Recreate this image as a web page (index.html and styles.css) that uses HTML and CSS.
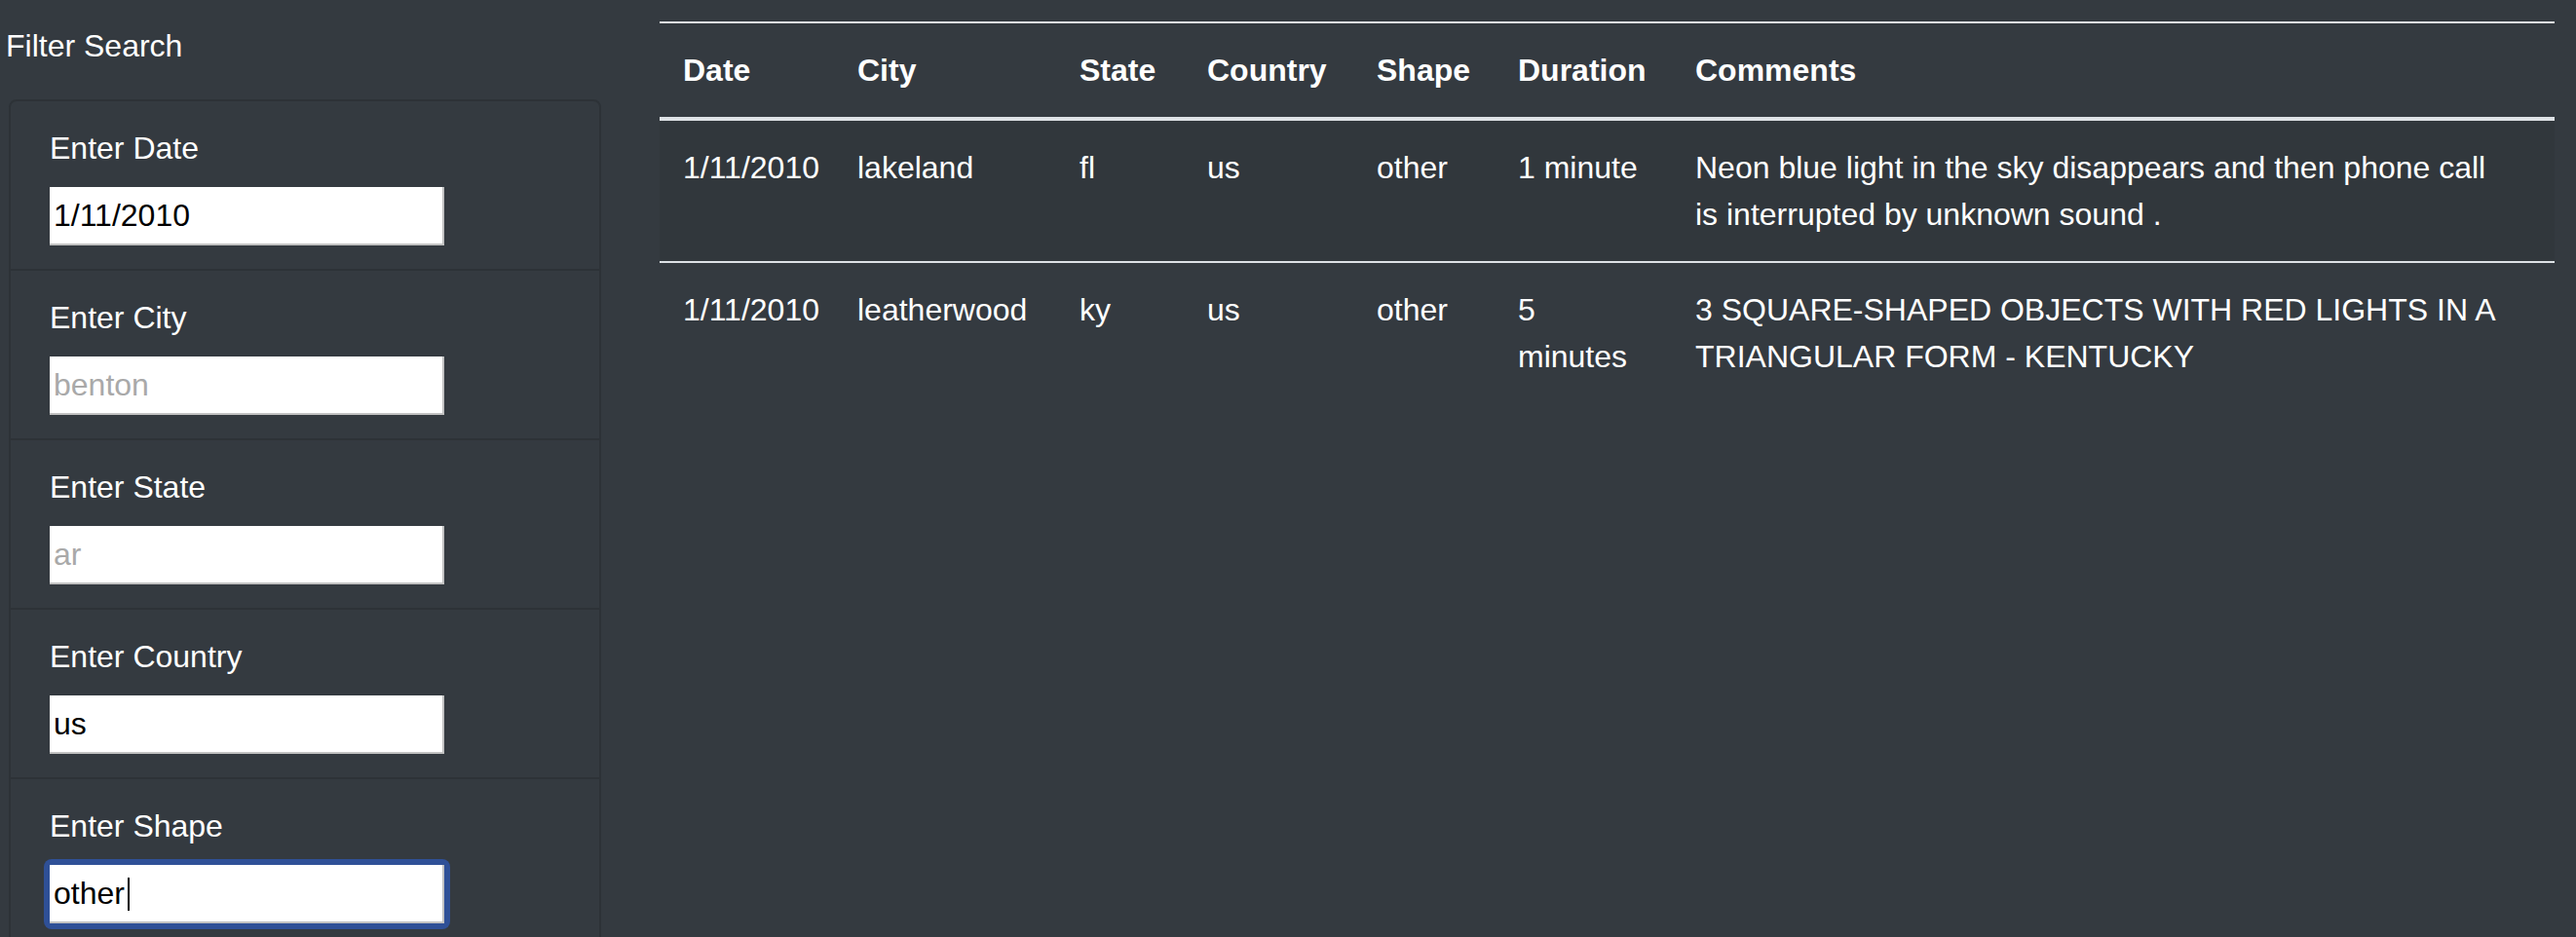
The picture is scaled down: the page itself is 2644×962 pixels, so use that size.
FILE: index.html
```html
<!DOCTYPE html>
<html lang="en">
<head>
<meta charset="utf-8">
<title>UFO Sightings</title>
<link rel="stylesheet" href="styles.css">
</head>
<body>
<div class="page">
  <aside class="sidebar">
    <div class="title">Filter Search</div>
    <ul class="card">
      <li class="field">
        <label class="field-label" for="datetime">Enter Date</label>
        <input class="field-input" id="datetime" type="text" value="1/11/2010" placeholder="1/11/2010">
      </li>
      <li class="field">
        <label class="field-label" for="city">Enter City</label>
        <input class="field-input" id="city" type="text" placeholder="benton">
      </li>
      <li class="field">
        <label class="field-label" for="state">Enter State</label>
        <input class="field-input" id="state" type="text" placeholder="ar">
      </li>
      <li class="field">
        <label class="field-label" for="country">Enter Country</label>
        <input class="field-input" id="country" type="text" value="us" placeholder="us">
      </li>
      <li class="field">
        <label class="field-label" for="shape">Enter Shape</label>
        <div class="focus-ring">
          <input class="field-input" id="shape" type="text" value="other" placeholder="circle">
          <span class="caret"></span>
        </div>
      </li>
    </ul>
  </aside>
  <main class="main">
    <table class="ufo-table">
      <colgroup>
        <col class="c-date">
        <col class="c-city">
        <col class="c-state">
        <col class="c-country">
        <col class="c-shape">
        <col class="c-duration">
        <col class="c-comments">
      </colgroup>
      <thead>
        <tr>
          <th>Date</th>
          <th>City</th>
          <th>State</th>
          <th>Country</th>
          <th>Shape</th>
          <th>Duration</th>
          <th class="comments">Comments</th>
        </tr>
      </thead>
      <tbody>
        <tr>
          <td>1/11/2010</td>
          <td>lakeland</td>
          <td>fl</td>
          <td>us</td>
          <td>other</td>
          <td>1 minute</td>
          <td class="comments">Neon blue light in the sky disappears and then phone call is interrupted by unknown sound .</td>
        </tr>
        <tr>
          <td>1/11/2010</td>
          <td>leatherwood</td>
          <td>ky</td>
          <td>us</td>
          <td>other</td>
          <td>5 minutes</td>
          <td class="comments">3 SQUARE-SHAPED OBJECTS WITH RED LIGHTS IN A TRIANGULAR FORM - KENTUCKY</td>
        </tr>
      </tbody>
    </table>
  </main>
</div>
</body>
</html>
```
FILE: styles.css
```css
html, body {
  margin: 0;
  padding: 0;
  background: #343a40;
  overflow: hidden;
}

body {
  font-family: "Liberation Sans", Arial, sans-serif;
  font-size: 32px;
  line-height: 48px;
  color: #ffffff;
}

.page {
  display: flex;
  align-items: flex-start;
  padding: 0 22px 0 6px;
}

/* ---------- sidebar ---------- */
.sidebar {
  flex: none;
  width: 611px;
  padding-top: 23px;
}

.title {
  margin-bottom: 31px;
}

.card {
  list-style: none;
  margin: 0 0 0 3px;
  padding: 0;
  border: 2px solid #2d3237;
  border-radius: 8px;
}

.field {
  padding: 24px 40px;
  border-top: 2px solid #2d3237;
}

.field:first-child {
  border-top: none;
}

.field-label {
  display: block;
  margin-bottom: 16px;
}

.field-input {
  display: block;
  box-sizing: border-box;
  width: 405px;
  height: 60px;
  margin: 0;
  padding: 0 4px;
  border: none;
  border-right: 2px solid #c2c2c2;
  border-bottom: 2px solid #c2c2c2;
  border-radius: 0;
  background: #ffffff;
  color: #000000;
  font-family: inherit;
  font-size: 32px;
  outline: none;
}

.field-input::placeholder {
  color: #a9a9a9;
  opacity: 1;
}

.focus-ring {
  position: relative;
  width: 405px;
  margin: -6px;
  padding: 6px;
  border-radius: 8px;
  background: #2f5097;
}

.caret {
  position: absolute;
  left: 86px;
  top: 19px;
  width: 2px;
  height: 34px;
  background: #000000;
}

/* ---------- table ---------- */
.main {
  flex: 1;
  min-width: 0;
  margin-left: 60px;
  padding-top: 22px;
}

.ufo-table {
  width: 100%;
  border-collapse: collapse;
  table-layout: fixed;
}

.c-date { width: 179px; }
.c-city { width: 228px; }
.c-state { width: 131px; }
.c-country { width: 174px; }
.c-shape { width: 145px; }
.c-duration { width: 182px; }

.ufo-table th,
.ufo-table td {
  padding: 24px;
  text-align: left;
  vertical-align: top;
  border-top: 2px solid #dee2e6;
}

.ufo-table th.comments,
.ufo-table td.comments {
  padding-right: 44px;
}

.ufo-table thead th {
  border-bottom: 4px solid #dee2e6;
  font-weight: bold;
}

.ufo-table tbody tr:nth-child(odd) {
  background: rgba(0, 0, 0, 0.05);
}
```
